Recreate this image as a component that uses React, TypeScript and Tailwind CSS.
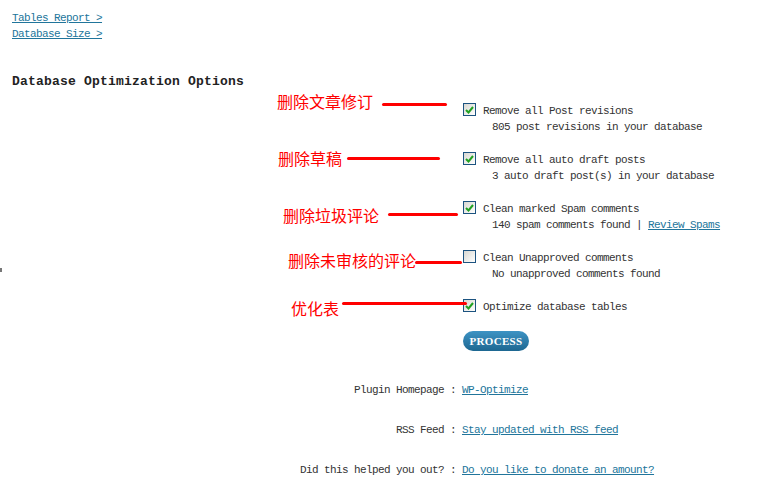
import React from 'react'

const mono = "font-['Liberation_Mono',monospace] text-[11px] tracking-[-0.6px] leading-4"
const link = 'text-[#21759b] underline'

const options = [
  { label: 'Remove all Post revisions', desc: <>805 post revisions in your database</>, checked: true },
  { label: 'Remove all auto draft posts', desc: <>3 auto draft post(s) in your database</>, checked: true },
  {
    label: 'Clean marked Spam comments',
    desc: (
      <>
        140 spam comments found | <a className={link}>Review Spams</a>
      </>
    ),
    checked: true,
  },
  { label: 'Clean Unapproved comments', desc: <>No unapproved comments found</>, checked: false },
  { label: 'Optimize database tables', desc: null, checked: true },
]

// red hand-drawn notes over the screenshot
const notes = [
  { text: '删除文章修订', x: 277, y: 91, lx: 382, lw: 65, ly: 103 },
  { text: '删除草稿', x: 278, y: 148, lx: 347, lw: 93, ly: 157 },
  { text: '删除垃圾评论', x: 283, y: 205, lx: 388, lw: 70, ly: 213 },
  { text: '删除未审核的评论', x: 288, y: 250, lx: 415, lw: 47, ly: 261 },
  { text: '优化表', x: 291, y: 298, lx: 342, lw: 125, ly: 302 },
]

const footer = [
  { label: 'Plugin Homepage :', href: 'WP-Optimize' },
  { label: 'RSS Feed :', href: 'Stay updated with RSS feed' },
  { label: 'Did this helped you out? :', href: 'Do you like to donate an amount?' },
]

function Checkbox({ checked }: { checked: boolean }) {
  return (
    <span className="w-[13px] h-[13px] shrink-0 border border-[#1c5380] bg-gradient-to-br from-[#d8d8d2] to-white flex items-center justify-center">
      {checked && (
        <svg width="9" height="8" viewBox="0 0 9 8">
          <path d="M1 4 L3.5 6.5 L8 1" stroke="#21a121" strokeWidth="2" fill="none" />
        </svg>
      )}
    </span>
  )
}

export default function App() {
  return (
    <div className={`relative w-[780px] h-[500px] bg-white text-[#333] pl-3 pt-[10px] ${mono}`}>
      <div className="flex flex-col items-start">
        <a className={link}>Tables Report &gt;</a>
        <a className={link}>Database Size &gt;</a>
      </div>

      <h2 className="mt-[31px] font-bold text-[13px] tracking-[0.2px] leading-[18px] text-[#222]">
        Database Optimization Options
      </h2>

      <div className="ml-[451px] mt-[12px] flex flex-col gap-[17px]">
        {options.map((o) => (
          <div key={o.label} className="flex gap-[7px]">
            <Checkbox checked={o.checked} />
            <div>
              <p>{o.label}</p>
              {o.desc && <p className="pl-[9px]">{o.desc}</p>}
            </div>
          </div>
        ))}
      </div>

      <button className="ml-[451px] mt-[16px] w-[66px] h-5 rounded-full bg-gradient-to-b from-[#3d93c4] to-[#1d6791] text-white font-['Liberation_Serif',serif] font-bold text-[11px] tracking-[0.3px] leading-5">
        PROCESS
      </button>

      <div className="mt-[31px] flex flex-col gap-6">
        {footer.map((f) => (
          <div key={f.label} className="flex">
            <span className="w-[450px] text-right pr-[6px]">{f.label}</span>
            <a className={link}>{f.href}</a>
          </div>
        ))}
      </div>

      {notes.map((n) => (
        <React.Fragment key={n.text}>
          <span
            className="absolute text-[#ff0000] text-[16px] leading-5 tracking-normal font-['Noto_Sans_CJK_SC',sans-serif]"
            style={{ left: n.x, top: n.y }}
          >
            {n.text}
          </span>
          <span className="absolute h-[3px] bg-[#ff0000] rounded-full" style={{ left: n.lx, top: n.ly, width: n.lw }} />
        </React.Fragment>
      ))}

      <span className="absolute left-0 top-[268px] w-[2px] h-[4px] bg-[#777]" />
    </div>
  )
}
